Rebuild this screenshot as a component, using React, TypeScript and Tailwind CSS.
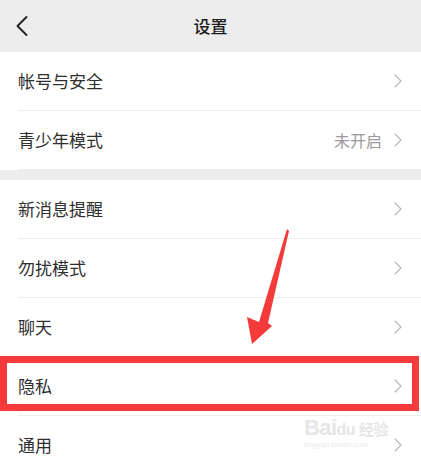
import { ChevronLeft, ChevronRight } from 'lucide-react';

const groups = [
  [
    { label: '帐号与安全' },
    { label: '青少年模式', value: '未开启' },
  ],
  [
    { label: '新消息提醒' },
    { label: '勿扰模式' },
    { label: '聊天' },
    { label: '隐私' },
    { label: '通用' },
  ],
];

const Row = ({ label, value }: { label: string; value?: string }) => (
  <div className="flex h-[59px] items-center pl-[18px]">
    <div className="flex h-full flex-1 items-center border-b border-[#ededed] pr-[11px]">
      <span className="flex-1 text-[17px] text-[#2e2e2e]">{label}</span>
      {value && <span className="mr-[4px] text-[16px] text-[#9a9a9a]">{value}</span>}
      <ChevronRight size={24} strokeWidth={1.1} className="text-[#b5b5b5]" />
    </div>
  </div>
);

export default function App() {
  return (
    <div
      className="relative h-[473px] w-[421px] overflow-hidden bg-[#ededed]"
      style={{ fontFamily: '"Noto Sans CJK SC", "Noto Sans", sans-serif' }}
    >
      {/* header */}
      <div className="relative flex h-[52px] items-center justify-center">
        <ChevronLeft size={36} strokeWidth={1.3} className="absolute left-[4px] text-[#222]" />
        <span className="text-[17px] font-medium text-[#1a1a1a]">设置</span>
      </div>

      {groups.map((g, i) => (
        <div key={i} className={i > 0 ? 'mt-[10px] bg-white' : 'bg-white'}>
          {g.map((r) => (
            <Row key={r.label} label={r.label} value={'value' in r ? r.value : undefined} />
          ))}
        </div>
      ))}

      {/* highlight box */}
      <div className="absolute left-0 top-[356px] h-[55px] w-[419px] border-[7px] border-[#f53a3c]" />

      {/* arrow */}
      <svg className="absolute left-0 top-0" width="421" height="473">
        <polygon
          points="287,229 289,231 268,323 272,326 252,344 247,317 259,322"
          fill="#f53a3c"
        />
      </svg>

      {/* watermark */}
      <div className="absolute left-[304px] top-[417px] flex flex-col items-start leading-none text-[#e6e6e6]">
        <span className="text-[22px] font-bold tracking-tight" style={{ fontFamily: '"Liberation Sans", sans-serif' }}>
          Bai<span className="text-[16px]">du</span>
          <span className="ml-1 text-[15px]" style={{ fontFamily: '"Noto Sans CJK SC", sans-serif' }}>经验</span>
        </span>
        <span className="mt-[2px] text-[8px] text-[#ebebeb]" style={{ fontFamily: '"Liberation Sans", sans-serif' }}>
          jingyan.baidu.com
        </span>
      </div>
    </div>
  );
}
